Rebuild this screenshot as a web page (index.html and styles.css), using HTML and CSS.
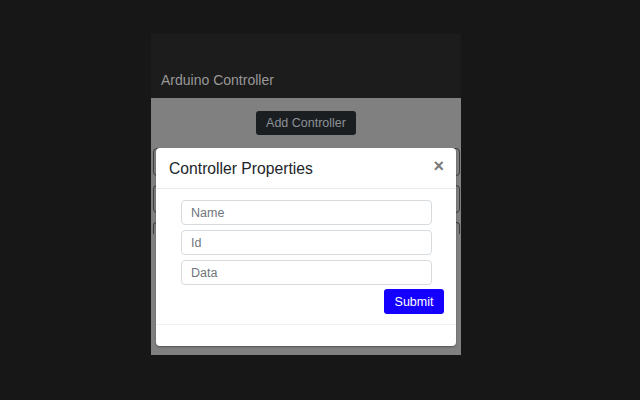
FILE: index.html
```html
<!DOCTYPE html>
<html>
<head>
<meta charset="utf-8">
<title>Arduino Controller</title>
<link rel="stylesheet" href="styles.css">
</head>
<body>
<div class="app">
  <header class="app-header">
    <span class="app-title">Arduino Controller</span>
  </header>
  <main class="app-body">
    <button class="btn-add">Add Controller</button>
    <ul class="ctrl-list">
      <li class="ctrl-item"></li>
      <li class="ctrl-item"></li>
      <li class="ctrl-item ctrl-item-last"></li>
    </ul>
  </main>
  <div class="modal">
    <div class="modal-header">
      <h5 class="modal-title">Controller Properties</h5>
      <button class="modal-close">&times;</button>
    </div>
    <div class="modal-body">
      <form class="props-form">
        <div class="fields">
          <input class="field" type="text" placeholder="Name">
          <input class="field" type="text" placeholder="Id">
          <input class="field" type="text" placeholder="Data">
        </div>
        <div class="actions">
          <button class="btn-submit" type="button">Submit</button>
        </div>
      </form>
    </div>
    <div class="modal-footer"></div>
  </div>
</div>
</body>
</html>
```

FILE: styles.css
```css
html, body {
  margin: 0;
  padding: 0;
}
body {
  background: #171717;
  font-family: "Liberation Sans", Arial, sans-serif;
  padding: 34px 0 0 151px;
  height: 400px;
  box-sizing: border-box;
}
.app {
  position: relative;
  width: 310px;
}
.app-header {
  height: 64px;
  background: #1c1c1c;
  display: flex;
  align-items: flex-end;
  padding: 0 10px 10px;
  box-sizing: border-box;
}
.app-title {
  font-size: 14px;
  line-height: 16px;
  color: #989898;
}
.app-body {
  height: 257px;
  background: #808080;
  padding-top: 13px;
  box-sizing: border-box;
  display: flex;
  flex-direction: column;
  align-items: center;
}
.btn-add {
  width: 100px;
  height: 24px;
  background: #1b1e21;
  color: #8b9095;
  border: none;
  border-radius: 3px;
  font-family: inherit;
  font-size: 12.5px;
  padding: 0;
  margin-bottom: 13px;
}
.ctrl-list {
  list-style: none;
  margin: 0;
  padding: 0 1px 0 2px;
  width: 100%;
  box-sizing: border-box;
  display: flex;
  flex-direction: column;
  gap: 9px;
}
.ctrl-item {
  height: 26px;
  border: 1px solid #3c3c3c;
  border-radius: 4px;
}
.ctrl-item-last {
  height: 11px;
  border-bottom: none;
  border-bottom-left-radius: 0;
  border-bottom-right-radius: 0;
}
.modal {
  position: absolute;
  left: 5px;
  top: 114px;
  width: 300px;
  height: 198px;
  background: #ffffff;
  border-radius: 4px;
  box-shadow: 0 1px 2px rgba(0, 0, 0, 0.35);
  display: flex;
  flex-direction: column;
}
.modal-header {
  height: 41px;
  box-sizing: border-box;
  border-bottom: 1px solid #e7eaed;
  display: flex;
  align-items: center;
  justify-content: space-between;
  padding: 0 12px 0 13px;
}
.modal-title {
  margin: 0;
  font-size: 15.7px;
  line-height: 19px;
  font-weight: normal;
  color: #212529;
}
.modal-close {
  background: none;
  border: none;
  padding: 0;
  margin-top: -4px;
  font-family: inherit;
  font-size: 18px;
  font-weight: bold;
  line-height: 18px;
  color: #7a7a7a;
}
.modal-body {
  padding: 11px 12px 10px;
  height: 135px;
  box-sizing: border-box;
}
.props-form {
  margin: 0;
}
.fields {
  display: flex;
  flex-direction: column;
  gap: 5px;
  margin: 0 12px 0 13px;
}
.field {
  height: 25px;
  box-sizing: border-box;
  border: 1px solid #d6dbe0;
  border-radius: 4px;
  padding: 0 9px;
  font-family: inherit;
  font-size: 12.5px;
  color: #495057;
  outline: none;
}
.field::placeholder {
  color: #6f757b;
}
.actions {
  display: flex;
  justify-content: flex-end;
  margin-top: 4px;
}
.btn-submit {
  width: 60px;
  height: 25px;
  background: #1500ff;
  color: #ffffff;
  border: none;
  border-radius: 3px;
  font-family: inherit;
  font-size: 12.5px;
  padding: 0;
}
.modal-footer {
  border-top: 1px solid #f0f0f0;
  flex: 1;
}
```
